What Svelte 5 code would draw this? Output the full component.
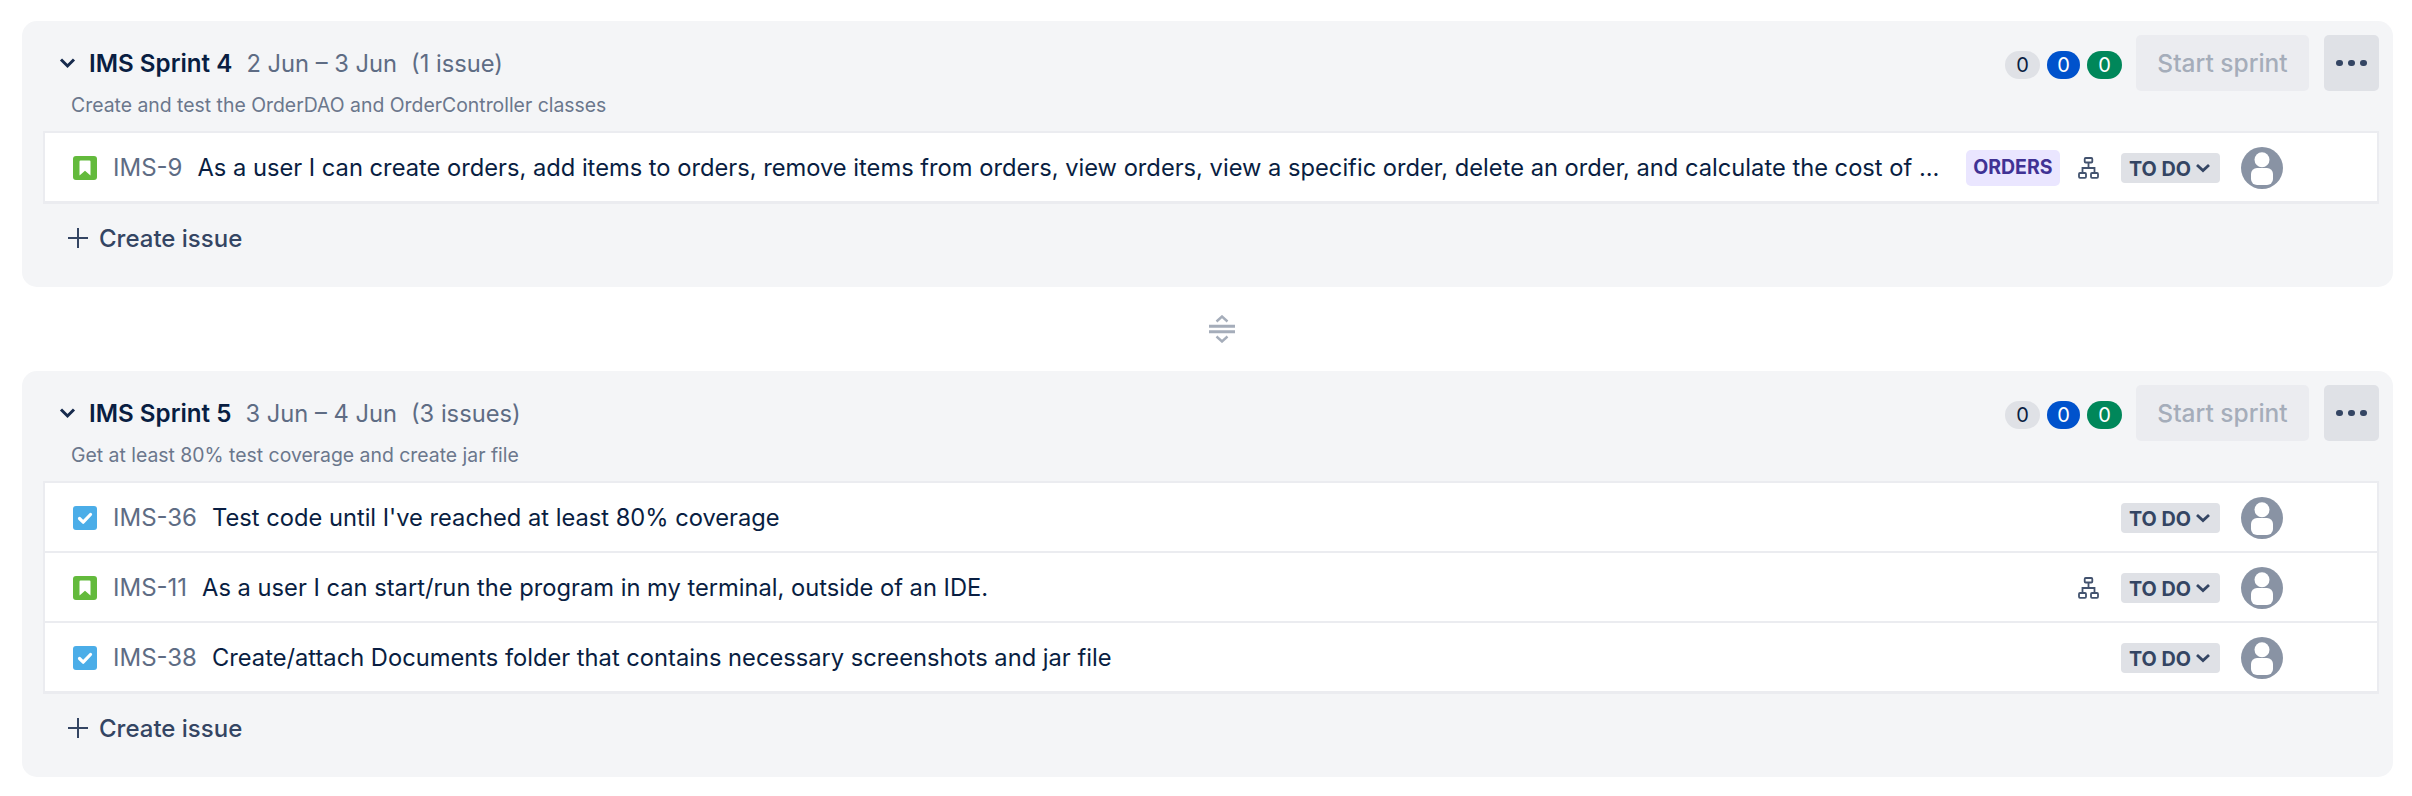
<script>
  const sprints = [
    {
      name: 'IMS Sprint 4', dates: '2 Jun – 3 Jun', count: '(1 issue)',
      goal: 'Create and test the OrderDAO and OrderController classes',
      issues: [
        { key: 'IMS-9', type: 'story', tree: true, epic: 'ORDERS',
          text: 'As a user I can create orders, add items to orders, remove items from orders, view orders, view a specific order, delete an order, and calculate the cost of ...' }
      ]
    },
    {
      name: 'IMS Sprint 5', dates: '3 Jun – 4 Jun', count: '(3 issues)',
      goal: 'Get at least 80% test coverage and create jar file',
      issues: [
        { key: 'IMS-36', type: 'task', text: "Test code until I've reached at least 80% coverage" },
        { key: 'IMS-11', type: 'story', tree: true, text: 'As a user I can start/run the program in my terminal, outside of an IDE.' },
        { key: 'IMS-38', type: 'task', text: 'Create/attach Documents folder that contains necessary screenshots and jar file' }
      ]
    }
  ];
</script>

<div class="page">
  {#each sprints as s, i}
    {#if i > 0}
      <div class="divider">
        <svg width="26" height="28" viewBox="0 0 26 28" fill="none" stroke="#a5adba">
          <path d="M7.500 6.500l5.500-5 5.500 5M7.500 21.500l5.500 5 5.500-5" stroke-width="2.400"/>
          <path d="M0 11.200h26M0 16.800h26" stroke-width="3"/>
        </svg>
      </div>
    {/if}
    <section class="sprint">
      <header class="head">
        <div class="titles">
          <div class="title-line">
            <svg class="chev" width="17" height="12" viewBox="0 0 17 12" fill="none" stroke="#172b4d" stroke-width="3"><path d="M2 2.500l6.500 6.500 6.500-6.500"/></svg>
            <span class="name">{s.name}</span>
            <span class="dates">{s.dates}</span>
            <span class="dates count">{s.count}</span>
          </div>
          <div class="goal">{s.goal}</div>
        </div>
        <div class="actions">
          <div class="badges">
            <span class="badge grey">0</span>
            <span class="badge blue">0</span>
            <span class="badge green">0</span>
          </div>
          <button class="start">Start sprint</button>
          <button class="more" aria-label="More">
            <span></span><span></span><span></span>
          </button>
        </div>
      </header>

      <div class="list">
        {#each s.issues as it}
          <div class="row">
            {#if it.type === 'story'}
              <svg class="type" width="24" height="24" viewBox="0 0 24 24">
                <rect width="24" height="24" rx="3" fill="#63ba3c"/>
                <path d="M6.500 5.500a1 1 0 0 1 1-1h9a1 1 0 0 1 1 1v14L12 14.800 6.500 19.500z" fill="#fff"/>
              </svg>
            {:else}
              <svg class="type" width="24" height="24" viewBox="0 0 24 24">
                <rect width="24" height="24" rx="3" fill="#4bade8"/>
                <path d="M6.500 12.500l3.700 3.700 7.300-7.700" fill="none" stroke="#fff" stroke-width="3.200" stroke-linecap="round" stroke-linejoin="round"/>
              </svg>
            {/if}
            <span class="key">{it.key}</span>
            <span class="summary">{it.text}</span>
            <div class="meta">
              {#if it.epic}<span class="epic">{it.epic}</span>{/if}
              {#if it.tree}
                <svg class="tree" width="21" height="22" viewBox="0 0 21 22" fill="none" stroke="#42526e" stroke-width="1.800">
                  <rect x="6.700" y="1" width="7.600" height="4.500" rx="1"/>
                  <rect x="1" y="16" width="7" height="4.800" rx="1"/>
                  <rect x="13" y="16" width="7" height="4.800" rx="1"/>
                  <path d="M10.500 5.500v5.500M4.500 16v-5h12v5"/>
                </svg>
              {/if}
              <span class="status"><span class="status-text">TO DO</span>
                <svg width="14" height="10" viewBox="0 0 14 10" fill="none" stroke="#344563" stroke-width="2.800"><path d="M1 2l6 5.500 6-5.500"/></svg>
              </span>
              <svg class="avatar" width="42" height="42" viewBox="0 0 42 42">
                <circle cx="21" cy="21" r="21" fill="#8993a4"/>
                <circle cx="21" cy="12.800" r="7.500" fill="#fff"/>
                <rect x="10" y="21" width="22" height="17" rx="6" fill="#fff"/>
              </svg>
            </div>
          </div>
        {/each}
      </div>

      <div class="create">
        <svg width="22" height="22" viewBox="0 0 22 22" fill="none" stroke="#344563" stroke-width="2"><path d="M11 1v20M1 11h20"/></svg>
        <span>Create issue</span>
      </div>
    </section>
  {/each}
</div>

<style>
  :global(body) {
    margin: 0;
    background: #fff;
  }
  .page {
    width: 2412px;
    height: 796px;
    box-sizing: border-box;
    padding: 21px 19px 0 22px;
    font-family: Inter, "Liberation Sans", sans-serif;
    color: #172b4d;
    overflow: hidden;
  }
  .sprint {
    background: #f4f5f7;
    border-radius: 15px;
    padding: 14px 14px 18px 21px;
  }
  .divider {
    height: 84px;
    display: flex;
    align-items: center;
    justify-content: center;
    padding-left: 28px;
  }
  .head {
    display: flex;
    justify-content: space-between;
    height: 96px;
  }
  .titles {
    padding: 14px 0 0 0;
  }
  .title-line {
    display: flex;
    align-items: center;
    height: 28px;
    margin-left: 16px;
  }
  .chev {
    margin-right: 13px;
  }
  .name {
    font-size: 24.200px;
    font-weight: 600;
    color: #091e42;
    margin-right: 14px;
  }
  .dates {
    font-size: 23.700px;
    color: #5e6c84;
  }
  .count {
    margin-left: 14px;
  }
  .goal {
    font-size: 19.400px;
    color: #6b778c;
    margin: 16px 0 0 28px;
  }
  .actions {
    display: flex;
    align-items: flex-start;
  }
  .badges {
    display: flex;
    gap: 7px;
    margin: 16px 14px 0 0;
  }
  .badge {
    height: 28px;
    min-width: 33px;
    border-radius: 14px;
    font-size: 20px;
    line-height: 28px;
    text-align: center;
    background: #dfe1e6;
    color: #091e42;
  }
  .grey { width: 35px; }
  .blue { background: #0052cc; color: #fff; }
  .green { background: #00875a; color: #fff; width: 35px; }
  button {
    border: 0;
    border-radius: 5px;
    height: 56px;
    font-family: inherit;
    padding: 0;
  }
  .start {
    width: 173px;
    background: #ebecf0;
    color: #a5adba;
    font-size: 24.500px;
    font-weight: 500;
    margin-right: 15px;
  }
  .more {
    width: 55px;
    background: #dfe1e6;
    display: flex;
    align-items: center;
    justify-content: center;
    gap: 5.500px;
  }
  .more span {
    width: 6.700px;
    height: 6.700px;
    border-radius: 50%;
    background: #344563;
  }
  .list {
    border: 2px solid #ebecf0;
    background: #ebecf0;
    display: flex;
    flex-direction: column;
    gap: 2px;
    padding-bottom: 1px;
  }
  .row {
    height: 68px;
    box-sizing: border-box;
    padding: 1px 0 0 28px;
    background: #fff;
    display: flex;
    align-items: center;
  }
  .type {
    flex: none;
    margin-right: 16px;
  }
  .key {
    flex: none;
    font-size: 24px;
    color: #5e6c84;
    margin-right: 15px;
  }
  .summary {
    font-size: 23.700px;
    color: #091e42;
    flex: 1;
    min-width: 0;
    white-space: nowrap;
    overflow: hidden;
  }
  .meta {
    flex: none;
    display: flex;
    align-items: center;
    margin-left: 20px;
    padding-right: 94px;
  }
  .epic {
    height: 36px;
    line-height: 35px;
    padding: 0 7.500px;
    background: #eae6ff;
    color: #403294;
    border-radius: 5px;
    font-size: 19.500px;
    font-weight: 700;
    margin-right: 18px;
  }
  .tree {
    margin-right: 22px;
  }
  .status {
    display: flex;
    align-items: center;
    gap: 5px;
    height: 30px;
    padding: 0 10px 0 8px;
    background: #dfe1e6;
    border-radius: 4px;
    color: #344563;
    font-size: 19.800px;
    font-weight: 700;
    margin-right: 21px;
  }
  .status-text {
    position: relative;
    top: 1px;
  }
  .avatar {
    flex: none;
  }
  .create {
    height: 62px;
    padding-top: 3px;
    display: flex;
    align-items: center;
    padding-left: 24px;
    gap: 10px;
    font-size: 24px;
    font-weight: 500;
    color: #344563;
  }
</style>
